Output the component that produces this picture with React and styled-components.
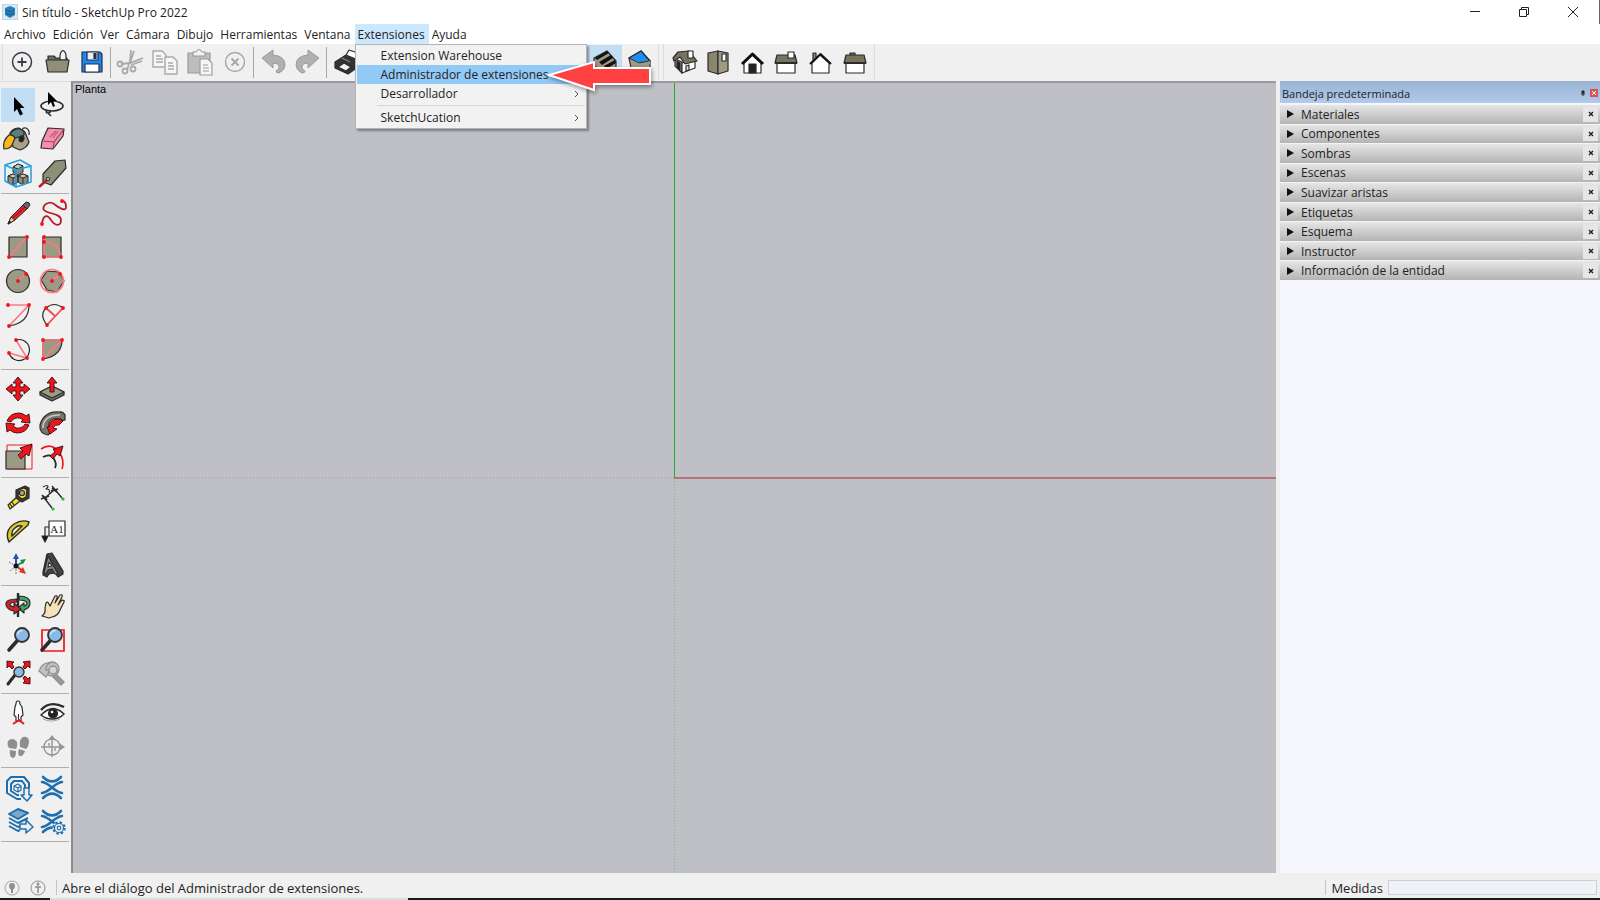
import { useState } from "react";
import styled, { createGlobalStyle } from "styled-components";

const GlobalStyle = createGlobalStyle`
  * {
    box-sizing: border-box;
  }
  body {
    margin: 0;
    font-family: "Open Sans", "Noto Sans", sans-serif;
    font-size: 12px;
    color: #222;
  }
  button {
    font: inherit;
    color: inherit;
    border: none;
    padding: 0;
    background: none;
  }
`;

const Window = styled.div`
  display: flex;
  flex-direction: column;
  height: 100vh;
  overflow: hidden;
  background: #f0f0f0;
`;

/* title bar */
const TitleBar = styled.header`
  display: flex;
  align-items: center;
  height: 24px;
  padding-left: 2px;
  gap: 4px;
  background: #fff;
  border-right: 1px solid #666;
`;

const Title = styled.h1`
  flex: 1;
  margin: 0;
  font-size: 12px;
  font-weight: 400;
`;

const WindowButton = styled.button`
  display: flex;
  align-items: center;
  justify-content: center;
  width: 49px;
  height: 24px;
`;

const WindowButtons = styled.div`
  display: flex;
  padding-right: 2px;
`;

/* menu bar */
const MenuBar = styled.nav`
  display: flex;
  height: 20px;
  padding-left: 1px;
  background: #fff;
`;

const MenuEntry = styled.div`
  position: relative;
`;

const MenuButton = styled.button`
  height: 20px;
  padding: 0 4px 0 3px;
  white-space: nowrap;
  background: ${(props) => (props.$open ? "#cce8ff" : "transparent")};
`;

const Dropdown = styled.div`
  position: absolute;
  top: 20px;
  left: 0;
  z-index: 5;
  width: 232px;
  padding: 1px;
  background: #f2f2f2;
  border: 1px solid #b4b4b4;
  box-shadow: 2px 2px 2px rgba(0, 0, 0, 0.35);
`;

const DropdownItem = styled.button`
  display: flex;
  align-items: center;
  justify-content: space-between;
  width: 100%;
  height: 19px;
  padding: 0 6px 0 24px;
  background: ${(props) => (props.$active ? "#91c9f7" : "transparent")};
`;

const DropdownLine = styled.hr`
  height: 1px;
  margin: 2px 0 2px 20px;
  border: none;
  background: #d8d8d8;
`;

const Pointer = styled.svg`
  position: absolute;
  top: 12px;
  left: 188px;
  filter: drop-shadow(1px 2px 2px rgba(0, 0, 0, 0.4));
`;

/* toolbars */
const Toolbar = styled.div`
  display: flex;
  align-items: flex-start;
  height: 37px;
  padding-left: 2px;
  gap: 4px;
`;

const ToolbarGroup = styled.div`
  display: flex;
  align-items: center;
  height: 36px;
  padding: 0 ${(props) => props.$pad || 1}px;
  margin-right: ${(props) => props.$after || 0}px;
  border-left: 1px solid #dcdcdc;
  border-right: 1px solid #dcdcdc;
`;

const ToolbarLine = styled.span`
  width: 1px;
  height: 31px;
  margin: 0 1px;
  background: #a8a8a8;
`;

const ToolButton = styled.button`
  display: flex;
  align-items: center;
  justify-content: center;
  width: ${(props) => (props.$wide ? 35 : 34)}px;
  height: 34px;
  background: ${(props) => (props.$active ? "#c2def5" : "transparent")};

  svg {
    overflow: visible;
  }
`;

const Main = styled.div`
  display: flex;
  flex: 1;
  min-height: 0;
`;

const Palette = styled.aside`
  width: 71px;
  padding: 6px 2px 0 1px;
  border-top: 1px solid #dcdcdc;
`;

const PaletteGroup = styled.div`
  display: grid;
  grid-template-columns: 34px 34px;
  padding-bottom: 3px;
  margin-bottom: 2px;
  border-bottom: 1px solid #b0b0b0;
`;

/* drawing area */
const Viewport = styled.main`
  position: relative;
  flex: 1;
  border-top: 2px solid #9a9a9e;
  border-left: 2px solid #8c8c90;
  background: #bfc0c5;
`;

const ViewName = styled.span`
  position: absolute;
  top: 0;
  left: 2px;
  font: 11px/13px "Liberation Sans", Arial, sans-serif;
  color: #000;
`;

const Axes = styled.svg`
  display: block;
  width: 100%;
  height: 100%;
`;

/* tray */
const Tray = styled.aside`
  width: 320px;
  margin-left: 4px;
  background: #f5f7fc;
`;

const TrayHeader = styled.div`
  display: flex;
  align-items: center;
  height: 22px;
  padding: 2px 2px 0;
  gap: 3px;
  background: linear-gradient(#98b2d2, #b2cbec);
`;

const TrayTitle = styled.h2`
  flex: 1;
  margin: 0;
  font-size: 11px;
  font-weight: 400;
`;

const TrayButton = styled.button`
  display: flex;
  width: 8px;
  height: 8px;
  background: ${(props) => (props.$close ? "#d9534f" : "transparent")};
`;

const TrayList = styled.div`
  display: grid;
  grid-auto-rows: 1fr;
  height: 176px;
  margin-top: 1px;
`;

const TrayRow = styled.div`
  display: flex;
  align-items: center;
  padding-right: 2px;
  border-top: 1px solid #f4f4f4;
  background: linear-gradient(#e6e6e6, #b4b4b4);
`;

const TrayToggle = styled.button`
  display: flex;
  flex: 1;
  align-items: center;
  gap: 7px;
  padding-left: 7px;
  line-height: 17px;
`;

const TrayClose = styled.button`
  display: flex;
  align-items: center;
  justify-content: center;
  width: 15px;
  height: 15px;
  background: #e6e6e6;
`;

/* status bar */
const StatusBar = styled.footer`
  display: flex;
  align-items: center;
  height: 25px;
  padding: 4px 3px 0 4px;
  font-size: 13px;
`;

const StatusButton = styled.button`
  display: flex;
  margin-right: 10px;
`;

const StatusLine = styled.span`
  width: 1px;
  height: 15px;
  margin-right: 5px;
  background: #c4c4c4;
`;

const StatusText = styled.span`
  flex: 1;
`;

const Measure = styled.input`
  width: 209px;
  height: 15px;
  margin-left: 5px;
  padding: 0 2px;
  font-size: 11px;
  background: #f0f2f5;
  border: 1px solid #c8d0de;
`;

const Taskbar = styled.div`
  display: grid;
  grid-template-columns: 50px 358px 1fr;
  height: 2px;
  background: #1a1a1a;
`;

const TaskbarSlot = styled.span`
  grid-column: 2;
  background: #dcdcdc;
`;

const RED = "#f2141c";
const STONE = "#9b9b85";
const DARK = "#2b2b2b";
const GREY = "#a9a9a9";
const BLUE = "#1f6fae";

function Dots({ at }) {
  return at.map(([x, y]) => <circle key={`${x}-${y}`} cx={x} cy={y} r="1.9" fill={RED} />);
}

const pink = { stroke: "#fb7a84", strokeWidth: 1.7, fill: "none" };
const ink = { stroke: DARK, strokeWidth: 1.2, fill: "none", strokeLinejoin: "round" };
const redShape = { fill: RED, stroke: "#3a0c0c", strokeWidth: 0.9, strokeLinejoin: "round" };
const blueLine = { stroke: BLUE, strokeWidth: 2, fill: "none", strokeLinejoin: "round" };

const glass = (
  <>
    <path d="M11 15L3 24" stroke={DARK} strokeWidth="3.6" strokeLinecap="round" />
    <circle cx="16" cy="9" r="7" fill="#8bb9e6" stroke="#333" strokeWidth="1.8" />
    <path d="M11.5 8.5q1-4 5-4" stroke="#d4e8fa" strokeWidth="1.4" fill="none" />
  </>
);

const warehouse = (
  <g stroke={BLUE} strokeWidth="2.6" fill="none" strokeLinecap="round">
    <path d="M4 3q9 9 18 0" />
    <path d="M4 24q9-9 18 0" />
    <path d="M3 8c8 1 12 10 20 11" />
    <path d="M23 8c-8 1-12 10-20 11" />
  </g>
);

const icons = {
  new: (
    <g {...ink} strokeWidth="1.5" stroke="#3c3c48">
      <circle cx="13" cy="13" r="9.5" />
      <path d="M13 8.5v9M8.5 13h9" strokeWidth="1.8" />
    </g>
  ),
  open: (
    <g {...ink} fill="#8f8f78">
      <path d="M4 21V7h6l2 2h11v12z" fill="#6e6e5c" />
      <path d="M16 11V7q0-4 3-5.5Q22 3 22 7v4z" fill="#f4f4f4" />
      <path d="M2 11h23l-2 12H4z" />
    </g>
  ),
  save: (
    <g stroke="#22304a" strokeWidth="1.2">
      <path d="M3 3h18l2 2v18H3z" fill="#1e86f0" />
      <path d="M8 3h11v8H8z" fill="#e8eef6" />
      <path d="M15 4.5h2v5h-2z" fill="#22304a" />
      <path d="M6 15h14v8H6z" fill="#fff" />
    </g>
  ),
  cut: (
    <g stroke={GREY} fill="none" strokeWidth="1.8">
      <path d="M14 1l-1 11-3 9M17 2l-4 12M26 9L13 14l-9 1M25 12l-11 4" />
      <circle cx="8" cy="22" r="2.500" />
      <circle cx="3" cy="15" r="2.500" />
      <circle cx="16" cy="20" r="2.500" />
    </g>
  ),
  copy: (
    <g stroke={GREY} fill="#f6f6f6" strokeWidth="1.4">
      <path d="M1 2h9l4 4v12H1z" />
      <path d="M4 7h5M4 10h7M4 13h7" />
      <path d="M13 8h8l4 4v13H13z" />
      <path d="M16 14h5M16 17h6M16 20h6" />
    </g>
  ),
  paste: (
    <g stroke="#9c9c9c" fill="#bdbdbd" strokeWidth="1.2">
      <path d="M1 4h22v20H1z" />
      <path d="M6 7V3h3q3-5 6 0h3v4z" fill="#f2f2f2" />
      <path d="M13 10h8l4 4v12H13z" fill="#f6f6f6" />
      <path d="M16 16h5M16 19h6M16 22h6" />
    </g>
  ),
  remove: (
    <g stroke="#a6a6a6" fill="none" strokeWidth="1.4">
      <circle cx="13" cy="13" r="9.5" />
      <path d="M9.5 9.5l7 7M16.5 9.5l-7 7" strokeWidth="1.8" />
    </g>
  ),
  undo: (
    <path
      d="M2 9l11-8v5q12 1 12 10 0 5-6 8-3 0-3-2 4-2 3-5-1-3-6-3v5z"
      fill="#b0b0b0"
      stroke="#9a9a9a"
    />
  ),
  redo: (
    <path
      d="M24 9L13 1v5Q1 7 1 16q0 5 6 8 3 0 3-2-4-2-3-5 1-3 6-3v5z"
      fill="#b0b0b0"
      stroke="#9a9a9a"
    />
  ),
  print: (
    <g {...ink}>
      <path d="M12 8l4-7 9 3-3 7z" fill="#fff" />
      <path d="M2 13l11-7 12 5v7l-10 7-13-6z" fill="#333" />
      <path d="M5 18l6-4 7 4-5 4z" fill="#f4f4f4" />
      <path d="M9 9l8 4" stroke="#888" />
    </g>
  ),
  info: (
    <g {...ink}>
      <circle cx="13" cy="13" r="10" />
      <path d="M13 11v8M13 7v2" />
    </g>
  ),
  cube: (
    <g {...ink} fill="#fff">
      <path d="M3 8l10-5 10 5v11l-10 5-10-5zM3 8l10 5 10-5M13 13v11" />
    </g>
  ),
  textured: (
    <g {...ink}>
      <path d="M2 9l13-7 9 10v7l-10 6-12-8z" fill="#a09a86" />
      <path d="M3 9l12-7 2 2-12 7zM7 13l12-7 2 3-11 7zM12 17l11-6 1 3-10 6z" fill="#111" stroke="none" />
    </g>
  ),
  mono: (
    <g {...ink}>
      <path d="M2 9l12-7 9 10v7l-10 6-9-6z" fill="#a09a80" />
      <path d="M2 9l12-7 9 10-12 2z" fill="#1e8ff0" />
      <path d="M3 10l10 5 10-3v3l-10 4-9-6z" fill="#a09a80" stroke="none" />
    </g>
  ),
  iso: (
    <g {...ink}>
      <path d="M4 10v7l7 7V13z" fill="#a9a9a9" />
      <path d="M11 14v10l13-5v-9z" fill="#fff" />
      <path d="M2 9l5-6 11-1 8 10-12 3-5-7-6 4z" fill="#77735c" />
      <path d="M17 2h5v7h-5z" fill="#fff" />
      <path d="M6 12l3 2v7l-3-3z" fill="#222" />
      <path d="M15 17l3-1v5l-3 1z" fill="#ddd" />
    </g>
  ),
  top: (
    <g {...ink}>
      <path d="M3 4l10-2v23L3 22z" fill="#8a866e" />
      <path d="M13 2l10 2v18l-10 3z" fill="#9f9b83" />
      <path d="M17 5h4v7h-4z" fill="#fff" />
    </g>
  ),
  front: (
    <g {...ink}>
      <path d="M5 14v10h17V14l-9-8z" fill="#fff" />
      <path d="M10 15h7v9h-7z" fill="#222" />
      <path d="M3 15L13.5 5 24 15" strokeWidth="3" stroke="#111" />
    </g>
  ),
  right: (
    <g {...ink}>
      <path d="M4 14h18v10H4z" fill="#fff" />
      <path d="M4 6h18l2 8H2z" fill="#77735c" />
      <path d="M15 3h6v6h-6z" fill="#fff" />
      <path d="M2 14h22" strokeWidth="2" />
    </g>
  ),
  back: (
    <g {...ink}>
      <path d="M6 11V4h3v4" fill="#888" />
      <path d="M5 14v10h17V14l-9-8z" fill="#fff" />
      <path d="M3 15L13.5 5 24 15" strokeWidth="2" stroke="#111" />
    </g>
  ),
  left: (
    <g {...ink}>
      <path d="M5 14h18v10H5z" fill="#fff" />
      <path d="M9 4h5v3H9z" fill="#77735c" />
      <path d="M5 6h18l2 8H3z" fill="#77735c" />
      <path d="M3 14h22" strokeWidth="2" />
    </g>
  ),

  select: <path d="M9 5v15l3-3 3 6.500 3-1.500-3-6h4.500z" fill="#000" />,
  lasso: (
    <g {...ink} strokeWidth="1.6">
      <ellipse cx="13" cy="14" rx="11" ry="5" />
      <path d="M8 18q-2 3 1 3t2-3M9 21l3 3" />
      <path d="M9 0v13l3-3 2 5 2-1-2-5h4z" fill="#000" stroke="none" />
    </g>
  ),
  paint: (
    <g {...ink}>
      <path d="M18 7q-2-6 3-5 4 2 3 7" />
      <path d="M5 7q3-5 9-5l6 4 4 10q-2 6-9 8L8 21z" fill="#a8a288" />
      <path d="M5 8q4-6 10-5 5 2 4 6L8 13z" fill="#5b7f7c" />
      <path d="M14 14q0-4 4-4 2 2 0 5-3 2-4-1z" fill="#222" />
      <path d="M4 9Q-3 15-1 23q6 0 8-4l3-7Q8 8 4 9z" fill="#f9b81c" />
    </g>
  ),
  eraser: (
    <g {...ink}>
      <path d="M9 2l16 1-1 7-10 13-12-1 1-7z" fill="#f48fae" />
      <path d="M3 15l12 1L25 3M15 16l-1 7" stroke="#a04060" />
      <path d="M11 11l6-6M14 12l5-7" stroke="#c05578" />
    </g>
  ),
  component: (
    <g {...ink} strokeWidth="1">
      <path d="M8 7l5-3 5 2v6l-5 3-5-3z" fill="#8d8a78" />
      <path d="M8 7l5-3 5 2-5 3z" fill="#c9c6b4" />
      <path d="M3 16l5-2 5 2v6l-5 3-5-3zM13 16l5-2 5 2v6l-5 3-5-3z" fill="#8d8a78" />
      <path d="M3 16l5-2 5 2-5 2zM13 16l5-2 5 2-5 2z" fill="#c9c6b4" />
      <path d="M8 18v6M18 18v6" />
      <g stroke="#22a0e4" strokeWidth="1.5" fill="none">
        <path d="M0 5l15-5 11 6v16l-15 5L0 21zM0 5l11 5 15-4M11 10v17" />
      </g>
    </g>
  ),
  tag: (
    <g {...ink}>
      <path d="M16 1l10-1 1 8-15 17-8-3v-8z" fill="#8e8f78" />
      <path d="M9 19l-9 8" stroke="#b3222c" strokeWidth="2.4" />
      <circle cx="9" cy="19" r="1.5" fill="#fff" />
    </g>
  ),
  pencil: (
    <g {...ink} strokeWidth="1">
      <path d="M3 24l3-7L19 4l4 4-13 12z" fill="#e8242c" />
      <path d="M8 18L21 6" stroke="#7a1018" />
      <path d="M3 24l3-7 4 3z" fill="#e8cfa2" />
      <path d="M3 24l1.500-3 1.500 1.500z" fill="#111" />
      <path d="M18 5l3-3q4 0 4 3l-3 4z" fill="#666" />
    </g>
  ),
  freehand: (
    <>
      <path
        d="M3 24C4 15 8 14 12 20S22 27 22 20 8 14 5 10 10 0 15 4s12 8 12 3-2-6-4-6"
        {...pink}
        stroke="#b81c2a"
        strokeWidth="1.8"
      />
      <Dots at={[[23, 1], [3, 24]]} />
    </>
  ),
  rectangle: (
    <>
      <path d="M4 3h18v20H4z" {...ink} fill={STONE} />
      <path d="M4 23L22 3" {...pink} />
      <Dots at={[[4, 23], [22, 3]]} />
    </>
  ),
  rotatedRect: (
    <>
      <path d="M4 3h18v20H4z" {...ink} fill={STONE} />
      <path d="M5 23V4M5 23h17M5 8q16 0 16 15" {...pink} />
      <Dots at={[[5, 3], [5, 8], [5, 23], [22, 23]]} />
    </>
  ),
  circle: (
    <>
      <circle cx="13" cy="13" r="11.5" {...ink} fill={STONE} />
      <path d="M13 13l8-7" {...pink} />
      <Dots at={[[13, 13], [21, 6]]} />
    </>
  ),
  polygon: (
    <>
      <path d="M8 3l12 1 5 9-7 11-10-2-6-10z" {...ink} fill={STONE} />
      <circle cx="13" cy="13" r="11.5" {...pink} />
      <path d="M13 13l8-7" {...pink} />
      <Dots at={[[13, 13], [21, 6]]} />
    </>
  ),
  arc: (
    <>
      <path d="M24 3q0 18-20 21" {...ink} />
      <path d="M3 3h21L4 24" {...pink} />
      <Dots at={[[3, 3], [24, 3], [4, 24]]} />
    </>
  ),
  twoPointArc: (
    <>
      <path d="M8 23Q0 13 7 6q8-7 17 0" {...ink} />
      <path d="M8 23L24 6M7 6l9 8" {...pink} stroke="#f04550" />
      <Dots at={[[7, 6], [24, 6], [8, 23]]} />
    </>
  ),
  threePointArc: (
    <>
      <path d="M11 4a10.500 10.500 0 1 1-7 13" {...ink} />
      <path d="M11 4l11 18L4 17" {...pink} />
      <Dots at={[[11, 4], [4, 17], [22, 22]]} />
    </>
  ),
  pie: (
    <>
      <path d="M4 4h19q0 16-19 19z" {...ink} fill={STONE} />
      <path d="M4 23V4h19L4 23" {...pink} />
      <Dots at={[[4, 4], [23, 4], [4, 23]]} />
    </>
  ),
  move: (
    <path
      {...redShape}
      d="M13 1l5 6h-3v4h4V8l6 5-6 5v-3h-4v4h3l-5 6-5-6h3v-4H7v3l-6-5 6-5v3h4V7H8z"
    />
  ),
  pushPull: (
    <>
      <path d="M1 16l12-6 12 6v3l-12 6-12-6z" {...ink} fill="#6f6f5c" />
      <path d="M1 16l12-6 12 6-12 6z" {...ink} fill={STONE} />
      <path {...redShape} d="M13 1l5 6h-3v9h-4V7H8z" />
    </>
  ),
  rotate: (
    <>
      <path {...redShape} d="M2 11q3-8 12-8 4 0 7 3l3-2 1 9-9-1 2-2q-3-3-7-2-4 1-5 4z" />
      <path {...redShape} d="M24 15q-3 8-12 8-4 0-7-3l-3 2-1-9 9 1-2 2q3 3 7 2 4-1 5-4z" />
    </>
  ),
  followMe: (
    <>
      <path d="M20 2q4-1 6 3v5q-3 1-5-1-8-2-11 4-1 6 3 8l-4 4Q0 24 1 15 5 1 20 2z" {...ink} fill="#77756a" />
      <path d="M4 18q0-13 17-13" {...ink} stroke="#c9c7bc" strokeWidth="1.6" />
      <path {...redShape} d="M20 9l4 2-4 4q-4-1-6 3l4 1-7 5-3-7h2q1-8 10-8z" />
    </>
  ),
  scale: (
    <>
      <path d="M2 1h25v24H2z" {...pink} stroke={RED} strokeWidth="1" />
      <path d="M1 7h19v18H1z" {...ink} fill={STONE} />
      <path {...redShape} d="M13 11l5-4-3-3 12-4-3 12-3-2-5 5z" />
    </>
  ),
  offset: (
    <>
      <path d="M2 5Q12-2 20 8q6 8 3 17" {...pink} stroke={RED} strokeWidth="1.6" />
      <path d="M4 13q8-4 11 2 3 5 1 9" {...ink} strokeWidth="1.8" />
      <path {...redShape} d="M11 12l5-4-2-3 10-3-3 10-3-2-4 5z" />
    </>
  ),
  tape: (
    <g {...ink}>
      <path d="M12 13l-9 8 2 4 10-8z" fill="#f3e12c" />
      <path d="M7 18l2 3M5 20l2 3" />
      <path d="M11 6l9-4 4 2v10l-7 4-6-4z" fill="#3a3a3a" />
      <path d="M14 6l5-2 3 2-1 7-4 2-4-3z" fill="#f0e030" />
      <circle cx="17" cy="9" r="2.5" fill="#aaa" />
    </g>
  ),
  dimension: (
    <g {...ink}>
      <path d="M6 14L15 6M3 11l10 13M13 2l10 12" strokeWidth="1.4" />
      <path d="M2 15l8-3M12 7l7-2M4 12l4 4M13 4l5 4" strokeWidth="1.8" />
      <path d="M4 3q5-3 5 0l-2 2q5 0 3 4" />
      <circle cx="14" cy="25" r="1.6" fill="#18c030" stroke="none" />
      <circle cx="24" cy="15" r="1.6" fill="#18c030" stroke="none" />
    </g>
  ),
  protractor: (
    <g {...ink} strokeWidth="1.4">
      <path
        d="M4 24Q-1 13 9 6q8-5 15-2l-1 3zM7 18l10-10q-4-1-7 2-4 3-3 8z"
        fill="#d9c92a"
        fillRule="evenodd"
      />
    </g>
  ),
  text: (
    <g {...ink}>
      <path d="M10 3h16v15H10z" fill="#fff" />
      <path d="M10 9H6v11" />
      <path d="M3 18h6l-3 6z" fill="#111" />
      <text x="18" y="15" fill="#222" stroke="none" textAnchor="middle" fontSize="11" fontFamily="Liberation Serif, serif">
        A1
      </text>
    </g>
  ),
  axes: (
    <g fill="none" strokeWidth="2">
      <path d="M11 14V7" stroke="#1d56b0" />
      <path d="M8 7l3-6 3 6z" fill="#1d56b0" />
      <path d="M11 14l7-4" stroke="#1b8a42" />
      <path d="M15 8l6-1-3 5z" fill="#1b8a42" />
      <path d="M11 14l7 5" stroke="#d32" />
      <path d="M18 15l3 7-7-2z" fill="#d32" />
      <path d="M11 14l-7-4M11 14l-6 5M11 14v9" stroke="#777" strokeWidth="1" strokeDasharray="2 1" />
      <circle cx="11" cy="14" r="2.5" fill="#111" />
    </g>
  ),
  text3d: (
    <g {...ink}>
      <path d="M4 20L8 2l5-1 11 18v3l-5 3-3-4-6 1-2 3-4-2z" fill="#444" />
      <path d="M5 21L9 4l10 18h-3l-3-5-4 1-2 4z" fill="#8d8b7c" />
      <path d="M9 15l1-5 3 4z" fill="#f0f0f0" />
    </g>
  ),
  orbit: (
    <g {...ink}>
      <path d="M13 1v24" strokeWidth="2.4" />
      <path d="M14 4q11 0 11 7 0 5-6 7v3l-6-5 6-5v3q3-1 3-3-1-3-8-3z" fill="#41a865" />
      <path d="M12 7Q0 7 1 13q1 5 8 6v3l7-5-7-6v4q-4-1-4-3 1-2 7-2z" fill="#d4222c" />
    </g>
  ),
  pan: (
    <path
      {...ink}
      fill="#f6e2b8"
      d="M3 24q4-3 3-8l1-5q2-2 3 1l1 2 5-10q3-1 2 2l-2 5 5-8q3-1 2 2l-4 8 4-5q3 0 2 2l-4 8q-2 6-8 7l-3 1z"
    />
  ),
  zoom: <g transform="translate(1 0)">{glass}</g>,
  zoomWindow: (
    <>
      <path d="M3 4h22v21H3z" {...pink} stroke={RED} />
      {glass}
    </>
  ),
  zoomExtents: (
    <>
      <path d="M10 15l-7 9" stroke={DARK} strokeWidth="3" strokeLinecap="round" />
      <circle cx="14" cy="12" r="5" fill="#8bb9e6" stroke="#333" strokeWidth="1.4" />
      <path {...redShape} d="M2 1l7 1-2 2 2 3-2 2-3-3-2 2zM25 1l-7 1 2 2-2 3 2 2 3-3 2 2zM25 24l-7-1 2-2-2-3 2-2 3 3 2-2z" />
    </>
  ),
  zoomPrevious: (
    <g stroke="#949494" fill="#c2c2c2" strokeWidth="1.4">
      <circle cx="13" cy="9" r="7" />
      <path d="M17 14l8 8-3 3-8-8z" fill="#999" />
      <path d="M1 9q3-7 10-6-5 3-4 7h4l-4 7-7-6z" />
      <circle cx="14" cy="10" r="4" fill="#d4d4d4" />
    </g>
  ),
  position: (
    <g {...ink}>
      <path d="M13 1q2 0 2 3l2 3 1 8-2 2v4h-5v-4l-2-2 1-8 1-3q0-3 2-3z" fill="#fff" />
      <path d="M13.500 14v7" strokeWidth="1" />
      <path d="M8 24l6-4 5 4" stroke={RED} strokeWidth="2" />
    </g>
  ),
  look: (
    <g {...ink}>
      <path d="M2 10q9-10 23-3" strokeWidth="2.4" />
      <path d="M2 15q8-8 15-6 4 1 8 5-5 5-12 5-6 0-11-4z" fill="#fff" strokeWidth="1.6" />
      <circle cx="14" cy="13.5" r="4.5" fill="#222" />
      <circle cx="13" cy="12" r="1.3" fill="#fff" stroke="none" />
      <path d="M4 19q8 4 17 0" stroke="#aaa" />
    </g>
  ),
  walk: (
    <g fill="#8e8e8e">
      <path d="M4 6q5-3 8 2 1 4-1 7l-7-1Q1 9 4 6zM5 16l6 1q0 7-3 7-4-1-3-8z" />
      <path d="M18 3q5-1 6 4 0 5-3 8l-6-2q-1-8 3-10zM14 15l6 2q-2 6-5 5t-1-7z" />
    </g>
  ),
  section: (
    <g stroke="#959595" fill="none" strokeWidth="1.4">
      <circle cx="13" cy="13" r="8" />
      <path d="M2 13h22M13 3v20" />
      <path d="M10 9v3M16 14v3" />
      <path d="M20 9l6 4-6 4zM10 5l3-4 3 4z" fill="#959595" stroke="none" />
    </g>
  ),
  warehouse3d: (
    <g {...blueLine}>
      <path d="M16 25l-4 0-10-6V7l4-4h13l5 6v5" />
      <path d="M14 21h-2l-6-4V10l3-3h8l3 4v3" />
      <path d="M13 10l3 2v4l-3 2-4-2v-4zM9 12l4 2 3-2M13 14v4" strokeWidth="1.2" />
      <path d="M19 14h5v7h3l-5 6-6-6h3z" fill="#f0f0f0" strokeWidth="1.5" />
    </g>
  ),
  extensionWarehouse: warehouse,
  layout: (
    <g {...blueLine}>
      <path d="M4 6l9-5 10 4-10 6z" fill="#78aad0" />
      <path d="M4 10l9 5 10-5M4 14l9 5 2-1M4 18l9 5 2-1" />
      <path d="M15 16h6v-4l7 7-7 6v-4h-6z" fill="#f0f0f0" strokeWidth="1.5" />
    </g>
  ),
  extensionManager: (
    <>
      {warehouse}
      <circle cx="20" cy="20" r="6.5" fill="#f0f0f0" />
      <circle cx="20" cy="20" r="5.5" {...blueLine} strokeWidth="2.4" strokeDasharray="2.4 1.9" />
      <circle cx="20" cy="20" r="4.5" {...blueLine} fill="#f0f0f0" strokeWidth="1.2" />
      <circle cx="20" cy="20" r="1.8" {...blueLine} strokeWidth="1.2" />
    </>
  ),
};

const standardTools = [
  ["new", "open", "save"],
  ["cut", "copy", "paste", "remove"],
  ["undo", "redo"],
  ["print", "info"],
];

const styleTools = [
  ["cube", "Rayos X"],
  ["cube", "Aristas posteriores"],
  ["cube", "Alámbrico"],
  ["cube", "Líneas ocultas"],
  ["cube", "Sombreado"],
  ["textured", "Sombreado con texturas"],
  ["mono", "Monocromo"],
];

const viewTools = ["iso", "top", "front", "right", "back", "left"];

const paletteTools = [
  ["select", "lasso", "paint", "eraser", "component", "tag"],
  [
    "pencil",
    "freehand",
    "rectangle",
    "rotatedRect",
    "circle",
    "polygon",
    "arc",
    "twoPointArc",
    "threePointArc",
    "pie",
  ],
  ["move", "pushPull", "rotate", "followMe", "scale", "offset"],
  ["tape", "dimension", "protractor", "text", "axes", "text3d"],
  ["orbit", "pan", "zoom", "zoomWindow", "zoomExtents", "zoomPrevious"],
  ["position", "look", "walk", "section"],
  ["warehouse3d", "extensionWarehouse", "layout", "extensionManager"],
];

const menus = [
  "Archivo",
  "Edición",
  "Ver",
  "Cámara",
  "Dibujo",
  "Herramientas",
  "Ventana",
  "Extensiones",
  "Ayuda",
];

const trays = [
  "Materiales",
  "Componentes",
  "Sombras",
  "Escenas",
  "Suavizar aristas",
  "Etiquetas",
  "Esquema",
  "Instructor",
  "Información de la entidad",
];

function Tool({ icon, label, ...rest }) {
  return (
    <ToolButton aria-label={label || icon} {...rest}>
      <svg width="26" height="26" viewBox="0 0 26 26">
        {icons[icon]}
      </svg>
    </ToolButton>
  );
}

function Chevron() {
  return (
    <svg width="5" height="8" viewBox="0 0 5 8">
      <path d="M1 1l3 3-3 3" fill="none" stroke="#555" />
    </svg>
  );
}

function ExtensionsMenu() {
  return (
    <Dropdown>
      <DropdownItem>Extension Warehouse</DropdownItem>
      <DropdownItem $active>Administrador de extensiones</DropdownItem>
      <DropdownItem>
        Desarrollador <Chevron />
      </DropdownItem>
      <DropdownLine />
      <DropdownItem>
        SketchUcation <Chevron />
      </DropdownItem>
      <Pointer width="112" height="36" viewBox="0 0 112 36">
        <path
          d="M5 18L50 5v6h56v16H50v6z"
          fill="#ff4141"
          stroke="#fff"
          strokeWidth="2"
        />
      </Pointer>
    </Dropdown>
  );
}

export default function App() {
  const [tool, setTool] = useState("select");

  return (
    <Window>
      <GlobalStyle />
      <TitleBar>
        <svg width="16" height="16" viewBox="0 0 16 16">
          <path d="M0 0h16v16H0z" fill="#d9e8f3" stroke="#a9c4d8" />
          <path d="M3 4l5-2 5 2v7l-5 3-5-3z" fill="#2b7fb8" />
          <path d="M4 6l4 2 4-2M4 9l4 2 4-2" stroke="#15598c" fill="none" />
        </svg>
        <Title>Sin título - SketchUp Pro 2022</Title>
        <WindowButtons>
          <WindowButton aria-label="Minimizar">
            <svg width="12" height="12" viewBox="0 0 12 12">
              <path d="M1 5.5h10" stroke="#222" />
            </svg>
          </WindowButton>
          <WindowButton aria-label="Restaurar">
            <svg width="12" height="12" viewBox="0 0 12 12">
              <path d="M1.5 3.5h7v7h-7zM3.5 3.5v-2h7v7h-2" fill="none" stroke="#222" />
            </svg>
          </WindowButton>
          <WindowButton aria-label="Cerrar">
            <svg width="12" height="12" viewBox="0 0 12 12">
              <path d="M1 1l10 10M11 1L1 11" stroke="#222" />
            </svg>
          </WindowButton>
        </WindowButtons>
      </TitleBar>

      <MenuBar>
        {menus.map((name) => (
          <MenuEntry key={name}>
            <MenuButton $open={name === "Extensiones"}>{name}</MenuButton>
            {name === "Extensiones" && <ExtensionsMenu />}
          </MenuEntry>
        ))}
      </MenuBar>

      <Toolbar>
        <ToolbarGroup $after={6}>
          {standardTools.map((group, i) => [
            i > 0 && <ToolbarLine key={`line-${i}`} />,
            ...group.map((icon) => <Tool key={icon} icon={icon} $wide />),
          ])}
        </ToolbarGroup>
        <ToolbarGroup>
          {styleTools.map(([icon, label]) => (
            <Tool key={label} icon={icon} label={label} $wide $active={icon === "textured"} />
          ))}
        </ToolbarGroup>
        <ToolbarGroup $pad={3}>
          {viewTools.map((icon) => (
            <Tool key={icon} icon={icon} />
          ))}
        </ToolbarGroup>
      </Toolbar>

      <Main>
        <Palette>
          {paletteTools.map((group) => (
            <PaletteGroup key={group[0]}>
              {group.map((icon) => (
                <Tool
                  key={icon}
                  icon={icon}
                  $active={icon === tool}
                  onClick={() => setTool(icon)}
                />
              ))}
            </PaletteGroup>
          ))}
        </Palette>

        <Viewport>
          <ViewName>Planta</ViewName>
          <Axes>
            <line x1="0" y1="50%" x2="50%" y2="50%" stroke="#b98a94" strokeDasharray="1 2" />
            <line x1="50%" y1="50%" x2="50%" y2="100%" stroke="#6fb87a" strokeDasharray="1 2" />
            <line x1="50%" y1="50%" x2="100%" y2="50%" stroke="#b0202c" />
            <line x1="50%" y1="0" x2="50%" y2="50%" stroke="#1fae2c" />
          </Axes>
        </Viewport>

        <Tray>
          <TrayHeader>
            <TrayTitle>Bandeja predeterminada</TrayTitle>
            <TrayButton aria-label="Fijar">
              <svg width="8" height="8" viewBox="0 0 8 8">
                <path d="M3 2h2v2H3zM2 5h4M4 5v2" stroke="#222" fill="#222" />
              </svg>
            </TrayButton>
            <TrayButton $close aria-label="Cerrar bandeja">
              <svg width="8" height="8" viewBox="0 0 8 8">
                <path d="M2 2l4 4M6 2L2 6" stroke="#fff" />
              </svg>
            </TrayButton>
          </TrayHeader>
          <TrayList>
            {trays.map((name) => (
              <TrayRow key={name}>
                <TrayToggle>
                  <svg width="7" height="8" viewBox="0 0 7 8">
                    <path d="M0 0l7 4-7 4z" fill="#111" />
                  </svg>
                  {name}
                </TrayToggle>
                <TrayClose aria-label={`Cerrar ${name}`}>
                  <svg width="6" height="6" viewBox="0 0 6 6">
                    <path d="M1 1l4 4M5 1L1 5" stroke="#222" strokeWidth="1.4" />
                  </svg>
                </TrayClose>
              </TrayRow>
            ))}
          </TrayList>
        </Tray>
      </Main>

      <StatusBar>
        <StatusButton aria-label="Geolocalización">
          <svg width="16" height="16" viewBox="0 0 16 16">
            <circle cx="8" cy="8" r="7" fill="none" stroke="#a4a4a4" />
            <path d="M8 3q3 0 3 3 0 2-2 4v3H7v-3Q5 8 5 6q0-3 3-3z" fill="#8f8f8f" />
          </svg>
        </StatusButton>
        <StatusButton aria-label="Créditos">
          <svg width="16" height="16" viewBox="0 0 16 16">
            <circle cx="8" cy="8" r="7" fill="none" stroke="#8f8f8f" />
            <circle cx="8" cy="4" r="1.5" fill="#8f8f8f" />
            <path d="M5 7h6M8 6v7" stroke="#8f8f8f" strokeWidth="1.5" />
          </svg>
        </StatusButton>
        <StatusLine />
        <StatusText>Abre el diálogo del Administrador de extensiones.</StatusText>
        <StatusLine />
        <label htmlFor="measure">Medidas</label>
        <Measure id="measure" />
      </StatusBar>
      <Taskbar>
        <TaskbarSlot />
      </Taskbar>
    </Window>
  );
}
